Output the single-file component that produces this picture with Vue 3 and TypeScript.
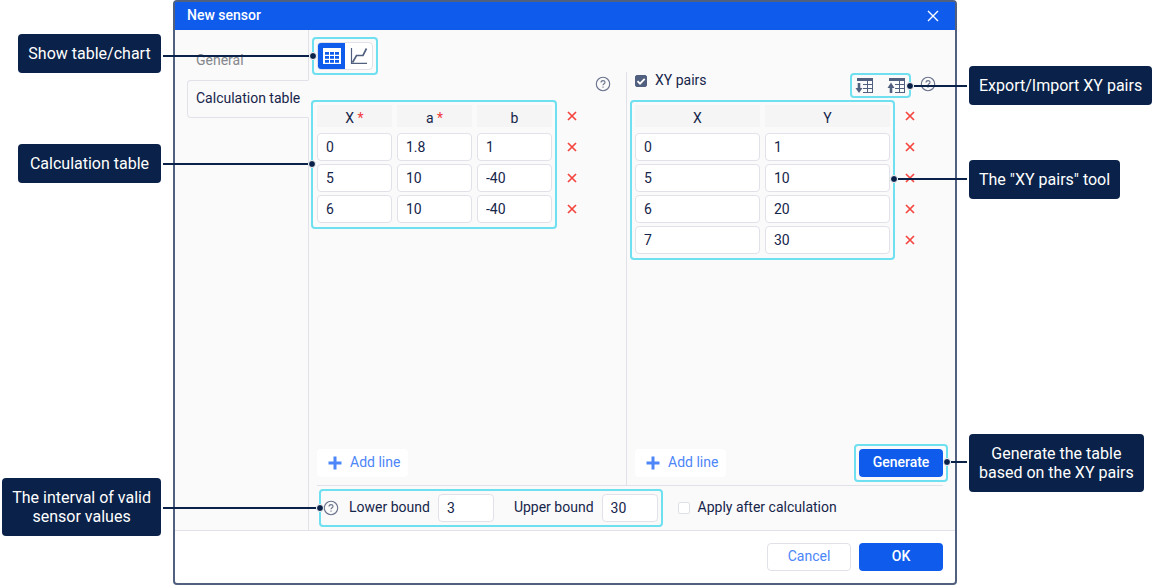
<script setup lang="ts">
import { ref } from 'vue'

interface CalcRow { x: string; a: string; b: string }
interface PairRow { x: string; y: string }
interface Column { label: string; required: boolean }

const calcColumns: Column[] = [
  { label: 'X', required: true },
  { label: 'a', required: true },
  { label: 'b', required: false },
]

const calcRows = ref<CalcRow[]>([
  { x: '0', a: '1.8', b: '1' },
  { x: '5', a: '10', b: '-40' },
  { x: '6', a: '10', b: '-40' },
])

const pairRows = ref<PairRow[]>([
  { x: '0', y: '1' },
  { x: '5', y: '10' },
  { x: '6', y: '20' },
  { x: '7', y: '30' },
])

const usePairs = ref(true)
const applyAfter = ref(false)
const lower = ref('3')
const upper = ref('30')
const view = ref<'table' | 'chart'>('table')
</script>

<template>
  <div class="scene">
    <section class="dialog" role="dialog" aria-labelledby="dialog-title">
      <header class="titlebar">
        <h1 id="dialog-title">New sensor</h1>
        <button class="close" type="button" aria-label="Close">
          <svg width="12" height="12" viewBox="0 0 12 12"><path d="M1 1L11 11M11 1L1 11" stroke="#fff" stroke-width="1.4" /></svg>
        </button>
      </header>

      <div class="body">
        <nav class="tabs">
          <a class="tab" href="#general">General</a>
          <a class="tab tab-active" href="#calculation">Calculation table</a>
        </nav>

        <main class="content">
          <div class="toolbar">
            <div class="frame frame-control">
              <div class="toggle">
                <button type="button" :class="{ on: view === 'table' }" aria-label="Table" @click="view = 'table'">
                  <svg width="18" height="16" viewBox="0 0 18 16">
                    <path d="M0 0H18V16H0Z" fill="#fff" />
                    <path d="M2 4h4v2.8h-4zM7 4h4v2.8h-4zM12 4h4v2.8h-4zM2 8h4v2.8h-4zM7 8h4v2.8h-4zM12 8h4v2.8h-4zM2 12h4v2.8h-4zM7 12h4v2.8h-4zM12 12h4v2.8h-4z" fill="#0f5cec" />
                  </svg>
                </button>
                <button type="button" :class="{ on: view === 'chart' }" aria-label="Chart" @click="view = 'chart'">
                  <svg width="18" height="16" viewBox="0 0 18 16" fill="none" stroke="#52607f">
                    <path d="M1.5 0V15.3H17" stroke-width="1.2" />
                    <path d="M2.5 14.5L6.5 7.5H13L16.5 0.5" stroke-width="1.7" />
                  </svg>
                </button>
              </div>
            </div>
          </div>

          <div class="panels">
            <section class="panel panel-calc">
              <div class="panel-head">
                <button class="help" type="button" aria-label="Help">
                  <svg width="16" height="16" viewBox="0 0 16 16"><circle cx="8" cy="8" r="6.7" /><path d="M6 6.6C6 4 10 4 10 6.4C10 7.8 8 7.8 8 9.3M8 10.4V11.7" /></svg>
                </button>
              </div>
              <div class="grid-line">
                <div class="frame frame-table">
                  <table>
                    <thead>
                      <tr>
                        <th v-for="c in calcColumns" :key="c.label" scope="col">
                          <div class="th">{{ c.label }}<span v-if="c.required" class="req">&nbsp;*</span></div>
                        </th>
                      </tr>
                    </thead>
                    <tbody>
                      <tr v-for="(r, i) in calcRows" :key="i">
                        <td><input v-model="r.x" type="text" aria-label="X"></td>
                        <td><input v-model="r.a" type="text" aria-label="a"></td>
                        <td><input v-model="r.b" type="text" aria-label="b"></td>
                      </tr>
                    </tbody>
                  </table>
                </div>
                <div class="deletes">
                  <button v-for="n in calcRows.length + 1" :key="n" type="button" aria-label="Delete line">
                    <svg width="10" height="10" viewBox="0 0 10 10"><path d="M1 1L9 9M9 1L1 9" /></svg>
                  </button>
                </div>
              </div>
              <div class="panel-foot">
                <button class="add" type="button">
                  <svg width="14" height="14" viewBox="0 0 14 14"><path d="M7 0.5V13.5M0.5 7H13.5" /></svg>
                  <span class="caption">Add line</span>
                </button>
              </div>
            </section>

            <section class="panel panel-pairs">
              <div class="panel-head">
                <label class="check-label">
                  <span class="check">
                    <input v-model="usePairs" type="checkbox">
                    <svg v-if="usePairs" width="12" height="12" viewBox="0 0 12 12"><path d="M2.5 6.2L5 8.7L9.7 3.8" /></svg>
                  </span>
                  <span class="caption">XY pairs</span>
                </label>
                <div class="frame frame-io">
                  <button type="button" aria-label="Export XY pairs">
                    <svg width="18" height="16" viewBox="0 0 18 16">
                      <path d="M2 0H18V3H2Z" fill="#52607f" />
                      <path d="M2.7 5H5.3V10H7.5L4 15L0.5 10H2.7Z" fill="#52607f" />
                      <path d="M8 6.5H18M8 10.5H18M8 14.5H18M12.5 3V15M17.5 3V15" stroke="#52607f" fill="none" />
                    </svg>
                  </button>
                  <button type="button" aria-label="Import XY pairs">
                    <svg width="18" height="16" viewBox="0 0 18 16">
                      <path d="M2 0H18V3H2Z" fill="#52607f" />
                      <path d="M2.7 15H5.3V10H7.5L4 4.5L0.5 10H2.7Z" fill="#52607f" />
                      <path d="M8 6.5H18M8 10.5H18M8 14.5H18M12.5 3V15M17.5 3V15" stroke="#52607f" fill="none" />
                    </svg>
                  </button>
                </div>
                <button class="help" type="button" aria-label="Help">
                  <svg width="16" height="16" viewBox="0 0 16 16"><circle cx="8" cy="8" r="6.7" /><path d="M6 6.6C6 4 10 4 10 6.4C10 7.8 8 7.8 8 9.3M8 10.4V11.7" /></svg>
                </button>
              </div>
              <div class="grid-line">
                <div class="frame frame-table">
                  <table>
                    <thead>
                      <tr>
                        <th scope="col"><div class="th">X</div></th>
                        <th scope="col"><div class="th">Y</div></th>
                      </tr>
                    </thead>
                    <tbody>
                      <tr v-for="(r, i) in pairRows" :key="i">
                        <td><input v-model="r.x" type="text" aria-label="X"></td>
                        <td><input v-model="r.y" type="text" aria-label="Y"></td>
                      </tr>
                    </tbody>
                  </table>
                </div>
                <div class="deletes">
                  <button v-for="n in pairRows.length + 1" :key="n" type="button" aria-label="Delete pair">
                    <svg width="10" height="10" viewBox="0 0 10 10"><path d="M1 1L9 9M9 1L1 9" /></svg>
                  </button>
                </div>
              </div>
              <div class="panel-foot">
                <button class="add" type="button">
                  <svg width="14" height="14" viewBox="0 0 14 14"><path d="M7 0.5V13.5M0.5 7H13.5" /></svg>
                  <span class="caption">Add line</span>
                </button>
                <div class="frame frame-control">
                  <button class="btn primary" type="button">Generate</button>
                </div>
              </div>
            </section>
          </div>

          <div class="bounds">
            <div class="frame frame-bounds">
              <button class="help" type="button" aria-label="Help">
                <svg width="16" height="16" viewBox="0 0 16 16"><circle cx="8" cy="8" r="6.7" /><path d="M6 6.6C6 4 10 4 10 6.4C10 7.8 8 7.8 8 9.3M8 10.4V11.7" /></svg>
              </button>
              <label class="caption" for="lower">Lower bound</label>
              <input id="lower" v-model="lower" type="text">
              <label class="caption" for="upper">Upper bound</label>
              <input id="upper" v-model="upper" type="text">
            </div>
            <label class="check-label">
              <span class="check">
                <input v-model="applyAfter" type="checkbox">
                <svg v-if="applyAfter" width="12" height="12" viewBox="0 0 12 12"><path d="M2.5 6.2L5 8.7L9.7 3.8" /></svg>
              </span>
              <span class="caption">Apply after calculation</span>
            </label>
          </div>
        </main>
      </div>

      <footer class="actions">
        <button class="btn secondary" type="button">Cancel</button>
        <button class="btn primary" type="button">OK</button>
      </footer>
    </section>

    <div class="note left note-toggle">Show table/chart</div>
    <div class="note left note-calc">Calculation table</div>
    <div class="note left note-bounds">The interval of valid<br>sensor values</div>
    <div class="note right note-io">Export/Import XY pairs</div>
    <div class="note right note-pairs">The "XY pairs" tool</div>
    <div class="note right note-generate">Generate the table<br>based on the XY pairs</div>

    <div class="leader from-left lead-toggle"></div>
    <div class="leader from-left lead-calc"></div>
    <div class="leader from-left lead-bounds"></div>
    <div class="leader from-right lead-io"></div>
    <div class="leader from-right lead-pairs"></div>
    <div class="leader from-right lead-generate"></div>
  </div>
</template>

<style>
body {
  margin: 0;
  background: #fff;
}
</style>

<style scoped>
*,
*::before,
*::after {
  box-sizing: border-box;
}

.scene {
  position: relative;
  display: grid;
  grid-template-columns: 173px minmax(0, 1fr) 198px;
  min-height: 100vh;
  font: 14px/16px Roboto, "Liberation Sans", sans-serif;
  color: #16254a;
}

button,
input {
  margin: 0;
  font: inherit;
  color: inherit;
}

button {
  padding: 0;
  border: 0;
  background: none;
  cursor: pointer;
}

svg {
  display: block;
}

.caption {
  padding-bottom: 2px;
}

.dialog {
  grid-column: 2;
  display: flex;
  flex-direction: column;
  border: 2px solid #52607f;
  border-radius: 4px;
  background: #fff;
}

.titlebar {
  display: flex;
  align-items: center;
  justify-content: space-between;
  height: 28px;
  padding: 0 16px 0 12px;
  background: #0f5cec;
  color: #fff;
}

.titlebar h1 {
  margin: 0;
  padding-bottom: 2px;
  font-size: 14px;
  font-weight: 500;
}

.body {
  flex: 1;
  display: flex;
  background: #fafafa;
  border-bottom: 1px solid #e1e2e9;
}

.tabs {
  display: flex;
  flex-direction: column;
  width: 134px;
  padding: 12px 0 0 12px;
  box-shadow: inset -1px 0 #e1e2e9;
}

.tab {
  height: 38px;
  padding: 9px 8px;
  border: 1px solid transparent;
  color: #85878c;
  text-decoration: none;
  white-space: nowrap;
}

.tab-active {
  border-color: #e1e2e9;
  border-right-color: #fafafa;
  border-radius: 4px 0 0 4px;
  background: #fafafa;
  color: #16254a;
}

.content {
  flex: 1;
  display: flex;
  flex-direction: column;
  min-width: 0;
}

.frame {
  border: 2px solid #6fe0ef;
  border-radius: 4px;
}

.frame-control {
  padding: 3px;
}

.toolbar {
  display: flex;
  align-items: flex-start;
  height: 42px;
  padding: 7px 3px 0;
}

.toggle {
  display: flex;
  width: 56px;
  height: 28px;
  border: 1px solid #e1e2e9;
  border-radius: 4px;
  background: #fff;
  overflow: hidden;
}

.toggle button {
  flex: 1;
  display: grid;
  place-items: center;
}

.toggle .on {
  background: #0f5cec;
}

.panels {
  flex: 1;
  display: grid;
  grid-template-columns: 317fr 329fr;
}

.panel {
  display: flex;
  flex-direction: column;
  min-width: 0;
}

.panel-calc {
  padding-left: 2px;
}

.panel-pairs {
  padding-left: 3px;
  border-left: 1px solid #e1e2e9;
}

.panel-head {
  display: flex;
  align-items: flex-start;
  height: 28px;
  padding-left: 5px;
}

.help {
  flex: none;
  margin-top: 4px;
}

.help svg {
  fill: none;
  stroke: #68728c;
  stroke-width: 1.1;
}

.panel-calc .help {
  margin-left: auto;
  margin-right: 15px;
}

.panel-pairs .help {
  margin-left: 9px;
  margin-right: 19px;
}

.frame-io {
  display: flex;
  gap: 14px;
  height: 25px;
  margin: 1px 0 0 auto;
  padding: 3px 4px 3px 3px;
}

.check-label {
  display: flex;
  align-items: center;
  gap: 8px;
  white-space: nowrap;
}

.check {
  position: relative;
  width: 12px;
  height: 12px;
}

.check input {
  display: block;
  width: 12px;
  height: 12px;
  appearance: none;
  border: 1px solid #dfe1e8;
  border-radius: 2px;
  background: #fff;
}

.check input:checked {
  border-color: #52607f;
  background: #52607f;
}

.check svg {
  position: absolute;
  inset: 0;
  fill: none;
  stroke: #fff;
  stroke-width: 1.8;
  pointer-events: none;
}

.grid-line {
  flex: 1;
  display: flex;
  align-items: flex-start;
}

.panel-calc .grid-line {
  padding-right: 39px;
}

.panel-pairs .grid-line {
  padding-right: 30px;
}

.frame-table {
  flex: 1;
  padding: 0 3px 1px;
}

.panel-calc .frame-table {
  padding-left: 4px;
}

table {
  width: 100%;
  table-layout: fixed;
  border-collapse: separate;
  border-spacing: 0;
}

th,
td {
  padding: 0 0 3px 5px;
}

th:first-child,
td:first-child {
  padding-left: 0;
}

.panel-calc th:first-child {
  width: 75px;
}

.panel-pairs th:first-child {
  width: 125px;
}

.th {
  height: 22px;
  margin: 3px 0;
  padding-top: 5px;
  background: #f5f5f5;
  font-weight: 400;
}

.req {
  color: #f0393c;
}

input[type="text"] {
  display: block;
  width: 100%;
  height: 28px;
  padding: 0 8px;
  border: 1px solid #e1e2e9;
  border-radius: 4px;
  background: #fff;
}

.deletes {
  display: flex;
  flex-direction: column;
  width: 30px;
}

.deletes button {
  display: grid;
  place-items: center;
  height: 31px;
}

.deletes path {
  fill: none;
  stroke: #f4453f;
  stroke-width: 1.7;
}

.panel-foot {
  display: flex;
  align-items: center;
  justify-content: space-between;
  height: 44px;
  padding: 0 7px 0 6px;
}

.panel-pairs .panel-foot {
  padding-left: 5px;
}

.add {
  display: flex;
  align-items: center;
  gap: 8px;
  height: 28px;
  padding: 0 8px 0 11px;
  border-radius: 4px;
  background: #fff;
  color: #4d86f8;
}

.add path {
  stroke: #4d86f8;
  stroke-width: 3;
}

.bounds {
  display: flex;
  align-items: center;
  gap: 15px;
  height: 45px;
  margin: 0 12px 0 8px;
  padding-left: 2px;
  border-top: 1px solid #e1e2e9;
}

.frame-bounds {
  display: flex;
  align-items: center;
  height: 38px;
  padding: 0 3px 0 2px;
}

.frame-bounds .help {
  margin: 0;
}

.frame-bounds label {
  margin: 0 8px 0 10px;
  white-space: nowrap;
}

.frame-bounds input {
  width: 56px;
}

.frame-bounds input + label {
  margin-left: 20px;
}

.actions {
  display: flex;
  align-items: center;
  justify-content: flex-end;
  gap: 8px;
  height: 52px;
  padding-right: 12px;
}

.btn {
  display: block;
  width: 84px;
  height: 28px;
  padding-bottom: 2px;
  border-radius: 4px;
}

.primary {
  background: #0f5cec;
  color: #fff;
  font-weight: 500;
}

.secondary {
  border: 1px solid #e1e2e9;
  background: #fff;
  color: #4d86f8;
}

.note {
  position: absolute;
  min-width: 143px;
  padding: 10px;
  border-radius: 4px;
  background: #0a2249;
  color: #fff;
  font-size: 16px;
  line-height: 19px;
  text-align: center;
  white-space: nowrap;
}

.left {
  right: calc(100% - 161px);
}

.right {
  left: calc(100% - 186px);
}

.note-toggle {
  top: 34px;
}

.note-calc {
  top: 144px;
}

.note-bounds {
  bottom: 49px;
}

.note-io {
  top: 66px;
}

.note-pairs {
  top: 160px;
}

.note-generate {
  bottom: 93px;
}

.leader {
  position: absolute;
  display: flex;
  align-items: center;
  height: 8px;
}

.leader::before {
  content: "";
  flex: 1;
  height: 2px;
  background: #0a2249;
}

.leader::after {
  content: "";
  width: 8px;
  height: 8px;
  border: 1px solid #fafafa;
  border-radius: 50%;
  background: #0a2249;
}

.from-left {
  left: 163px;
}

.from-right {
  right: 188px;
  flex-direction: row-reverse;
}

.lead-toggle {
  top: 52px;
  width: 154px;
}

.lead-calc {
  top: 160px;
  width: 153px;
}

.lead-bounds {
  bottom: 73px;
  width: 161px;
}

.lead-io {
  top: 82px;
  width: 61px;
}

.lead-pairs {
  top: 175px;
  width: 77px;
}

.lead-generate {
  bottom: 119px;
  width: 24px;
}
</style>
